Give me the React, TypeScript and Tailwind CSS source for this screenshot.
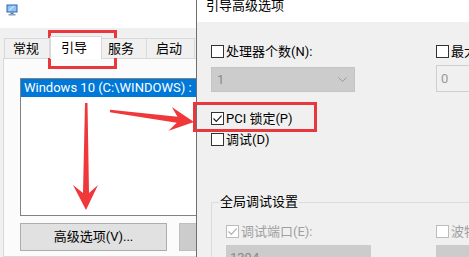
import React from "react";

function Check({ checked = false, disabled = false }: { checked?: boolean; disabled?: boolean }) {
  return (
    <div
      className={
        "w-[13px] h-[13px] shrink-0 border bg-white flex items-center justify-center " +
        (disabled ? "border-[#bcbcbc]" : "border-[#333333]")
      }
    >
      {checked && (
        <svg width="11" height="11" viewBox="0 0 11 11">
          <path d="M1.5 5.5 L4.3 8.3 L9.6 2.6" fill="none" stroke={disabled ? "#b0b0b0" : "#222"} strokeWidth="1.2" />
        </svg>
      )}
    </div>
  );
}

function MonitorIcon() {
  return (
    <svg width="12" height="12" viewBox="0 0 12 12">
      <rect x="0.5" y="0.5" width="11" height="8" fill="#2a63b8" />
      <rect x="1.5" y="1.5" width="9" height="6" fill="#8fc4f0" />
      <path d="M3 6.5 L8 2" stroke="#ffffff" strokeWidth="0.8" />
      <rect x="4.5" y="8.5" width="3" height="1.5" fill="#5a7fa8" />
      <rect x="2.5" y="10" width="7" height="1.5" fill="#8aa0b8" />
    </svg>
  );
}

export default function App() {
  return (
    <div className="relative w-[469px] h-[257px] overflow-hidden bg-white font-['Roboto','Noto_Sans_CJK_SC',sans-serif] text-[13px] text-black">
      {/* Left (background) window */}
      <div className="absolute left-0 top-0 w-[240px] h-[257px] flex flex-col bg-[#f0f0f0]">
        <div className="h-[28px] shrink-0 bg-white pl-[6px] pt-[4px]">
          <MonitorIcon />
        </div>
        <div className="pl-[3px] pt-[8px] flex flex-col flex-1">
          <div className="flex items-end h-[22px] shrink-0 pl-[1px] relative z-10">
            <div className="h-[20px] w-[46px] border border-[#d9d9d9] border-b-0 bg-[#f0f0f0] pl-[8px] leading-[19px]">常规</div>
            <div className="h-[23px] w-[52px] border border-[#d9d9d9] border-b-0 bg-white pl-[10px] leading-[21px] -mb-[1px]">引导</div>
            <div className="h-[20px] w-[45px] border border-[#d9d9d9] border-b-0 border-l-0 bg-[#f0f0f0] pl-[6px] leading-[19px]">服务</div>
            <div className="h-[20px] w-[48px] border border-[#d9d9d9] border-b-0 border-l-0 bg-[#f0f0f0] pl-[9px] leading-[19px]">启动</div>
          </div>
          <div className="flex-1 border border-[#d9d9d9] bg-[#fbfbfb] pl-[16px] pt-[19px] flex flex-col">
            <div className="h-[138px] w-[220px] shrink-0 border border-[#828282] bg-white">
              <div className="h-[18px] bg-[#0078d7] text-white pl-[3px] leading-[18px] whitespace-nowrap">
                Windows 10 (C:\WINDOWS) : 当前操作系统
              </div>
            </div>
            <div className="flex gap-[12px] mt-[7px] shrink-0">
              <div className="w-[147px] h-[28px] bg-[#e1e1e1] border border-[#adadad] flex items-center justify-center">
                高级选项(V)...
              </div>
              <div className="w-[60px] h-[28px] bg-[#cccccc] border border-[#bfbfbf]"></div>
            </div>
          </div>
        </div>
      </div>

      {/* Right (foreground) window */}
      <div className="absolute left-[196px] top-0 w-[290px] h-[257px] border-l border-[#6e6e6e] bg-[#f0f0f0]">
        <div className="h-[22px] bg-white pl-[9px] overflow-hidden">
          <div className="leading-[14px] -mt-[1px]">引导高级选项</div>
        </div>
        <div className="pl-[14px] pt-[23px]">
          <div className="grid grid-cols-[225px_1fr]">
            <div className="flex flex-col">
              <div className="flex items-center gap-[2px] h-[13px]">
                <Check />
                <span className="leading-[13px]">处理器个数(N):</span>
              </div>
              <div className="mt-[9px] h-[25px] w-[144px] bg-[#cccccc] border border-[#c4c4c4] flex items-center justify-between pl-[5px] pr-[7px] text-[#8a8a8a]">
                <span>1</span>
                <svg width="9" height="6" viewBox="0 0 9 6">
                  <path d="M0.5 0.5 L4.5 4.5 L8.5 0.5" fill="none" stroke="#9a9a9a" strokeWidth="1" />
                </svg>
              </div>
              <div className="flex items-center gap-[2px] h-[13px] mt-[20px]">
                <Check checked />
                <span className="leading-[13px]">PCI 锁定(P)</span>
              </div>
              <div className="flex items-center gap-[2px] h-[13px] mt-[8px]">
                <Check />
                <span className="leading-[13px]">调试(D)</span>
              </div>
            </div>
            <div className="flex flex-col">
              <div className="flex items-center gap-[2px] h-[13px]">
                <Check />
                <span className="leading-[13px]">最大内存(M):</span>
              </div>
              <div className="mt-[7px] h-[27px] w-[140px] bg-[#f0f0f0] border border-[#cfcfcf] flex items-center pl-[4px] text-[#9a9a9a]">
                0
              </div>
            </div>
          </div>

          <div className="mt-[56px] border-t border-l border-[#dcdcdc] relative h-[80px]">
            <div className="absolute left-[7px] -top-[9px] bg-[#f0f0f0] px-[1px] leading-[16px]">全局调试设置</div>
            <div className="grid grid-cols-[210px_1fr] pl-[14px] pt-[22px]">
              <div className="flex flex-col">
                <div className="flex items-center gap-[2px] h-[13px]">
                  <Check checked disabled />
                  <span className="leading-[13px] text-[#a0a0a0]">调试端口(E):</span>
                </div>
                <div className="mt-[7px] h-[25px] w-[145px] bg-[#cccccc] pl-[4px] text-[#8a8a8a] leading-[25px]">1394</div>
              </div>
              <div className="flex flex-col">
                <div className="flex items-center gap-[2px] h-[13px]">
                  <Check disabled />
                  <span className="leading-[13px] text-[#a0a0a0]">波特率(B):</span>
                </div>
                <div className="mt-[7px] h-[25px] w-[140px] bg-[#cccccc]"></div>
              </div>
            </div>
          </div>
        </div>
      </div>

      {/* Annotations */}
      <svg className="absolute left-0 top-0 pointer-events-none" width="469" height="257" viewBox="0 0 469 257">
        <rect x="49.5" y="31.5" width="66" height="36" fill="none" stroke="#e8373d" strokeWidth="3" />
        <rect x="194.5" y="103.5" width="121" height="27" fill="none" stroke="#e8373d" strokeWidth="3" />
        <polygon points="85,103 87.5,103 89,193 98,185 86,210 73,185 83,193" fill="#f0373a" />
        <polygon points="109.9,112.3 110.1,109.7 177.5,116.8 171.8,107 194,122 168.6,130.8 176.7,122.8" fill="#f0373a" />
      </svg>
    </div>
  );
}
